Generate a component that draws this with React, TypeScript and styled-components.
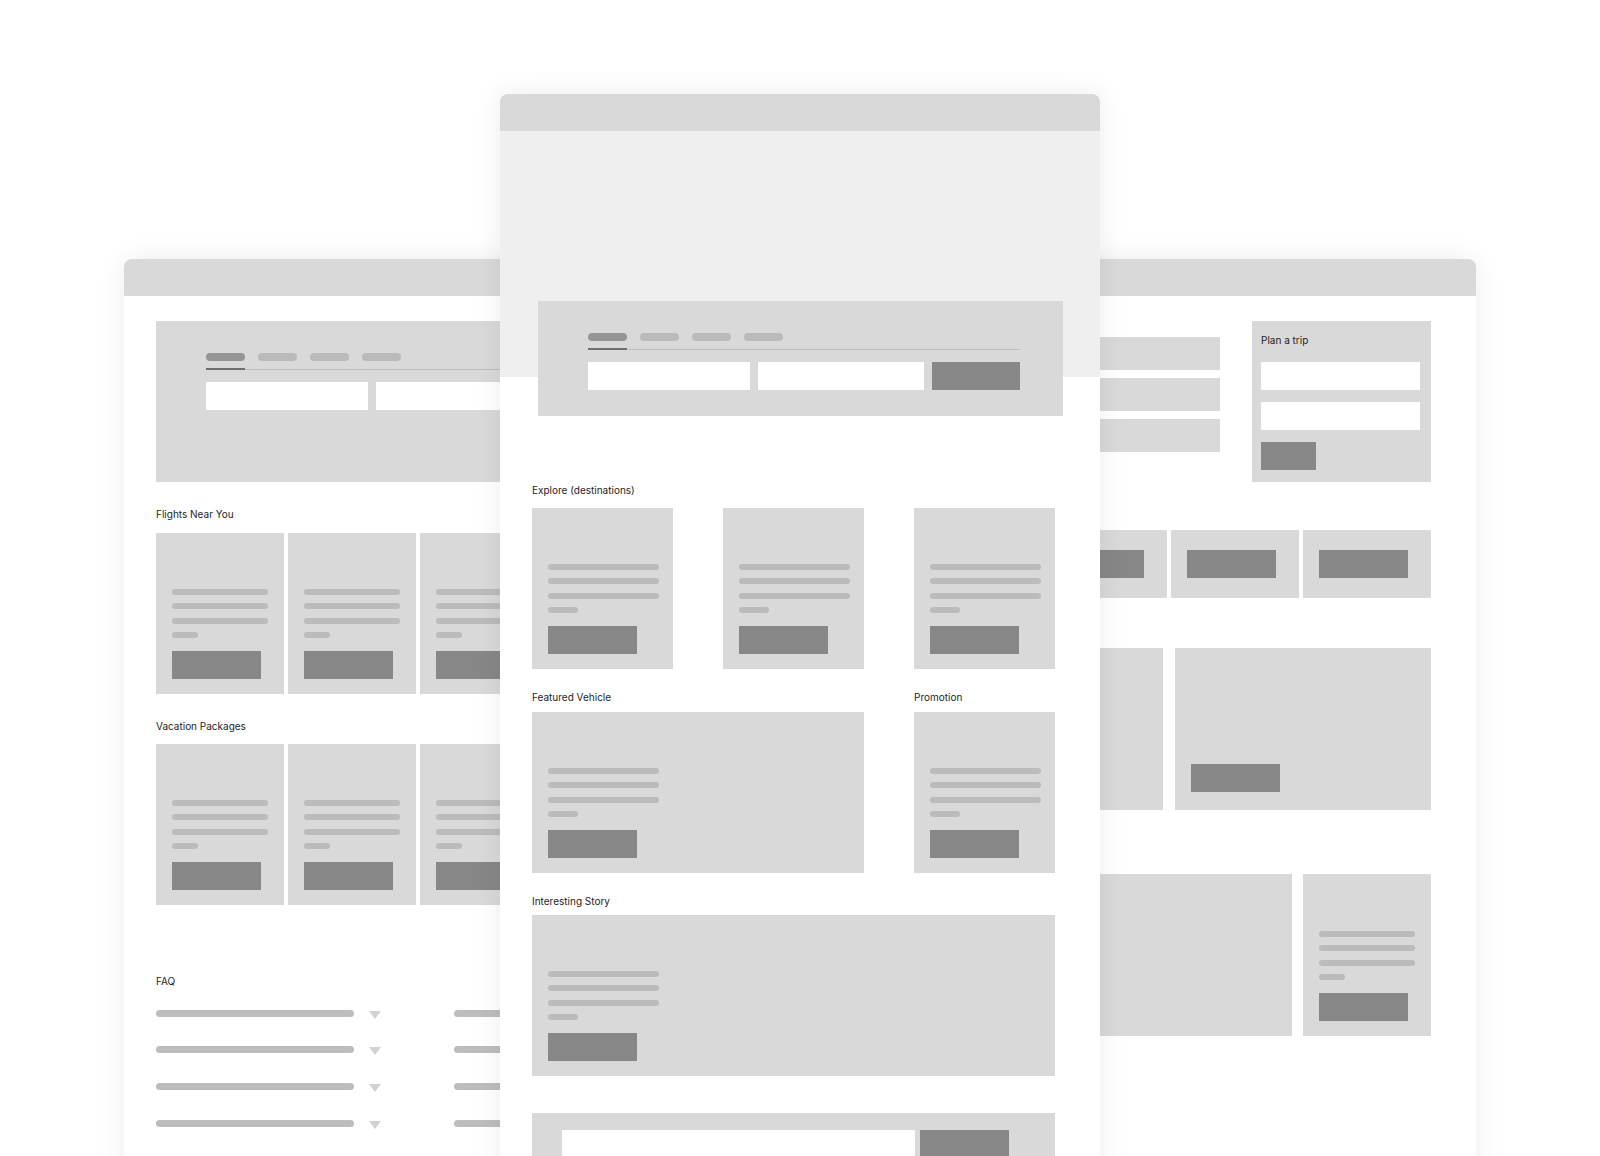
import React from 'react';
import styled, { createGlobalStyle } from 'styled-components';

const GlobalStyle = createGlobalStyle`
  html, body {
    margin: 0;
    padding: 0;
    background: #ffffff;
  }

  body {
    font-family: Inter, 'Liberation Sans', sans-serif;
  }
`;

const Stage = styled.div`
  position: relative;
  width: 1600px;
  height: 1156px;
  overflow: hidden;
  background: #ffffff;
`;

// windows sit on a free canvas, so they keep their own coordinates
const Window = styled.div<{ $left: number; $top: number; $width: number; $front?: boolean }>`
  position: absolute;
  left: ${(p) => p.$left}px;
  top: ${(p) => p.$top}px;
  width: ${(p) => p.$width}px;
  height: 1120px;
  background: #ffffff;
  border-radius: 8px 8px 0 0;
  box-shadow: 0 0 28px rgba(0, 0, 0, 0.08);
  overflow: hidden;
  z-index: ${(p) => (p.$front ? 2 : 1)};
`;

const TitleBar = styled.div`
  height: 37px;
  background: #d9d9d9;
`;

const Body = styled.div<{ $pad: string }>`
  padding: ${(p) => p.$pad};
`;

const Hero = styled.div`
  padding: 170px 37px 0 38px;
  background: linear-gradient(#efefef 0 246px, #ffffff 246px);
`;

const SearchCard = styled.div<{ $height: number }>`
  width: 525px;
  height: ${(p) => p.$height}px;
  box-sizing: border-box;
  padding: 32px 0 0 50px;
  background: #d9d9d9;
`;

const SearchInner = styled.div`
  width: 432px;
`;

const TabRow = styled.div`
  display: flex;
  gap: 13px;
  border-bottom: 1px solid #bdbdbd;
`;

const Tab = styled.div<{ $active?: boolean }>`
  padding-bottom: 7px;
  margin-bottom: -1px;
  border-bottom: 2px solid ${(p) => (p.$active ? '#6f6f6f' : 'transparent')};

  &::before {
    content: '';
    display: block;
    width: 39px;
    height: 8px;
    border-radius: 4px;
    background: ${(p) => (p.$active ? '#959595' : '#bababa')};
  }
`;

const FieldRow = styled.div<{ $top?: number; $gap?: number }>`
  display: flex;
  gap: ${(p) => p.$gap ?? 8}px;
  margin-top: ${(p) => p.$top ?? 12}px;
`;

const Field = styled.div<{ $w: number }>`
  width: ${(p) => p.$w}px;
  height: 28px;
  flex-shrink: 0;
  background: #ffffff;
`;

const SolidButton = styled.div<{ $w?: number; $top?: number }>`
  width: ${(p) => p.$w ?? 89}px;
  height: 28px;
  flex-shrink: 0;
  margin-top: ${(p) => p.$top ?? 0}px;
  background: #878787;
`;

const Label = styled.div<{ $span?: number; $gap?: number }>`
  grid-column: span ${(p) => p.$span ?? 1};
  margin-bottom: ${(p) => p.$gap ?? 11}px;
  font-size: 10px;
  line-height: 14px;
  color: #1e1e1e;
  white-space: nowrap;
`;

const Grid = styled.div<{ $cols: string; $gap: number; $top: number }>`
  display: grid;
  grid-template-columns: ${(p) => p.$cols};
  column-gap: ${(p) => p.$gap}px;
  margin-top: ${(p) => p.$top}px;
`;

const Cell = styled.div<{ $span?: number }>`
  grid-column: span ${(p) => p.$span ?? 1};
`;

const Tile = styled.div<{ $height?: number; $align?: 'start' | 'center' | 'end'; $bottom?: number; $left?: number }>`
  height: ${(p) => p.$height ?? 161}px;
  box-sizing: border-box;
  display: flex;
  flex-direction: column;
  justify-content: ${(p) => (p.$align === 'center' ? 'center' : p.$align === 'start' ? 'flex-start' : 'flex-end')};
  padding: 0 16px ${(p) => (p.$align === 'end' || !p.$align ? p.$bottom ?? 15 : 0)}px ${(p) => p.$left ?? 16}px;
  background: #d9d9d9;
`;

const Lines = styled.div`
  display: flex;
  flex-direction: column;
  gap: 8.4px;
  margin-bottom: 13px;
`;

const Line = styled.div<{ $w: number }>`
  width: ${(p) => p.$w}px;
  height: 6px;
  border-radius: 3px;
  background: #bbbbbb;
`;

const Faq = styled.div`
  display: grid;
  grid-template-columns: 298px 298px;
  row-gap: 24.8px;
  margin-top: 8px;
`;

const FaqItem = styled.div`
  display: flex;
  align-items: center;
  gap: 15px;
  height: 12px;
`;

const FaqLine = styled.div`
  width: 198px;
  height: 7px;
  border-radius: 4px;
  background: #bdbdbd;
`;

const Caret = styled.div`
  width: 0;
  height: 0;
  margin-top: 3px;
  border-left: 6px solid transparent;
  border-right: 6px solid transparent;
  border-top: 8px solid #d2d2d2;
`;

const Row = styled.div<{ $gap: number; $top?: number; $end?: boolean }>`
  display: flex;
  align-items: flex-start;
  justify-content: ${(p) => (p.$end ? 'flex-end' : 'flex-start')};
  gap: ${(p) => p.$gap}px;
  margin-top: ${(p) => p.$top ?? 0}px;
`;

const ListColumn = styled.div`
  flex: 1;
  display: flex;
  flex-direction: column;
  gap: 8px;
  padding-top: 16px;
`;

const ListRow = styled.div`
  height: 33px;
  background: #d9d9d9;
`;

const PlanCard = styled.div`
  width: 179px;
  height: 161px;
  box-sizing: border-box;
  flex-shrink: 0;
  padding: 12px 12px 0 9px;
  background: #d9d9d9;
`;

const PlanTitle = styled.div`
  font-size: 10px;
  line-height: 14px;
  color: #1e1e1e;
  margin-bottom: 15px;
`;

const PlanFields = styled.div`
  display: flex;
  flex-direction: column;
  gap: 12px;
`;

const Block = styled.div<{ $w?: number }>`
  flex: ${(p) => (p.$w ? `0 0 ${p.$w}px` : '1')};
  ${(p) => (p.$w ? `width: ${p.$w}px;` : '')}
`;

type TileProps = { lineW: number; shortW: number; height?: number };

const TextTile: React.FC<TileProps> = ({ lineW, shortW, height }) => (
  <Tile $height={height}>
    <Lines>
      <Line $w={lineW} />
      <Line $w={lineW} />
      <Line $w={lineW} />
      <Line $w={shortW} />
    </Lines>
    <SolidButton />
  </Tile>
);

const Search: React.FC<{ height: number }> = ({ height }) => (
  <SearchCard $height={height}>
    <SearchInner>
      <TabRow>
        <Tab $active />
        <Tab />
        <Tab />
        <Tab />
      </TabRow>
      <FieldRow>
        <Field $w={162} />
        <Field $w={166} />
        <SolidButton $w={88} />
      </FieldRow>
    </SearchInner>
  </SearchCard>
);

const LeftWindow = () => (
  <Window $left={124} $top={259} $width={640}>
    <TitleBar />
    <Body $pad="25px 0 0 32px">
      <Search height={161} />
      <Grid $cols="repeat(4, 128px)" $gap={4} $top={25}>
        <Label $span={4} $gap={12}>Flights Near You</Label>
        {[0, 1, 2, 3].map((i) => (
          <TextTile key={i} lineW={96} shortW={26} />
        ))}
      </Grid>
      <Grid $cols="repeat(4, 128px)" $gap={4} $top={25}>
        <Label $span={4}>Vacation Packages</Label>
        {[0, 1, 2, 3].map((i) => (
          <TextTile key={i} lineW={96} shortW={26} />
        ))}
      </Grid>
      <Grid $cols="1fr" $gap={0} $top={69}>
        <Label>FAQ</Label>
      </Grid>
      <Faq>
        {[0, 1, 2, 3, 4, 5, 6, 7].map((i) => (
          <FaqItem key={i}>
            <FaqLine />
            <Caret />
          </FaqItem>
        ))}
      </Faq>
    </Body>
  </Window>
);

const CenterWindow = () => (
  <Window $left={500} $top={94} $width={600} $front>
    <TitleBar />
    <Hero>
      <Search height={115} />
    </Hero>
    <Body $pad="0 44px 0 32px">
      <Grid $cols="repeat(3, 141px)" $gap={50} $top={67}>
        <Label $span={3}>Explore (destinations)</Label>
        <TextTile lineW={111} shortW={30} />
        <TextTile lineW={111} shortW={30} />
        <TextTile lineW={111} shortW={30} />
      </Grid>
      <Grid $cols="repeat(3, 141px)" $gap={50} $top={21}>
        <Cell $span={2}>
          <Label $gap={8}>Featured Vehicle</Label>
          <TextTile lineW={111} shortW={30} />
        </Cell>
        <Cell>
          <Label $gap={8}>Promotion</Label>
          <TextTile lineW={111} shortW={30} />
        </Cell>
      </Grid>
      <Grid $cols="repeat(3, 141px)" $gap={50} $top={21}>
        <Cell $span={3}>
          <Label $gap={7}>Interesting Story</Label>
          <TextTile lineW={111} shortW={30} />
        </Cell>
      </Grid>
      <Grid $cols="repeat(3, 141px)" $gap={50} $top={37}>
        <Cell $span={3}>
          <Tile $height={120} $align="start" $left={30}>
            <FieldRow $top={17} $gap={5}>
              <Field $w={353} />
              <SolidButton />
            </FieldRow>
          </Tile>
        </Cell>
      </Grid>
    </Body>
  </Window>
);

const RightWindow = () => (
  <Window $left={880} $top={259} $width={596}>
    <TitleBar />
    <Body $pad="25px 45px 0 32px">
      <Row $gap={32}>
        <ListColumn>
          <ListRow />
          <ListRow />
          <ListRow />
        </ListColumn>
        <PlanCard>
          <PlanTitle>Plan a trip</PlanTitle>
          <PlanFields>
            <Field $w={159} />
            <Field $w={159} />
          </PlanFields>
          <SolidButton $w={55} $top={12} />
        </PlanCard>
      </Row>
      <Row $gap={4} $top={48} $end>
        {[0, 1, 2, 3].map((i) => (
          <Block key={i} $w={128}>
            <Tile $height={68} $align="center">
              <SolidButton />
            </Tile>
          </Block>
        ))}
      </Row>
      <Row $gap={12} $top={50}>
        <Block>
          <Tile $height={162} />
        </Block>
        <Block $w={256}>
          <Tile $height={162} $bottom={18}>
            <SolidButton />
          </Tile>
        </Block>
      </Row>
      <Row $gap={11} $top={64}>
        <Block>
          <Tile $height={162} />
        </Block>
        <Block $w={128}>
          <TextTile lineW={96} shortW={26} height={162} />
        </Block>
      </Row>
    </Body>
  </Window>
);

const App = () => (
  <>
    <GlobalStyle />
    <Stage>
      <LeftWindow />
      <RightWindow />
      <CenterWindow />
    </Stage>
  </>
);

export default App;
